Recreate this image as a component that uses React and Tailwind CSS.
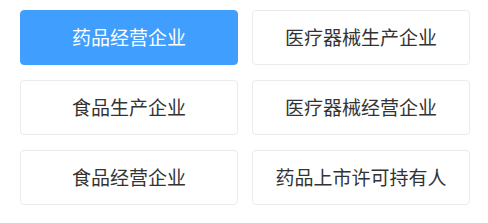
const items = [
  '药品经营企业',
  '医疗器械生产企业',
  '食品生产企业',
  '医疗器械经营企业',
  '食品经营企业',
  '药品上市许可持有人',
]

export default function App() {
  return (
    <div
      className="w-[488px] h-[223px] bg-white pl-[20px] pr-[18px] pt-[10px]"
      style={{ fontFamily: '"Noto Sans CJK SC", "Noto Sans", sans-serif' }}
    >
      <div className="grid grid-cols-2 gap-x-[14px] gap-y-[15px]">
        {items.map((name, i) => (
          <div
            key={name}
            className={`h-[55px] flex items-center justify-center rounded-[4px] text-[19px] ${
              i === 0
                ? 'bg-[#409eff] text-white border border-[#409eff]'
                : 'bg-white text-[#333333] border border-[#ebebeb]'
            }`}
          >
            {name}
          </div>
        ))}
      </div>
    </div>
  )
}
